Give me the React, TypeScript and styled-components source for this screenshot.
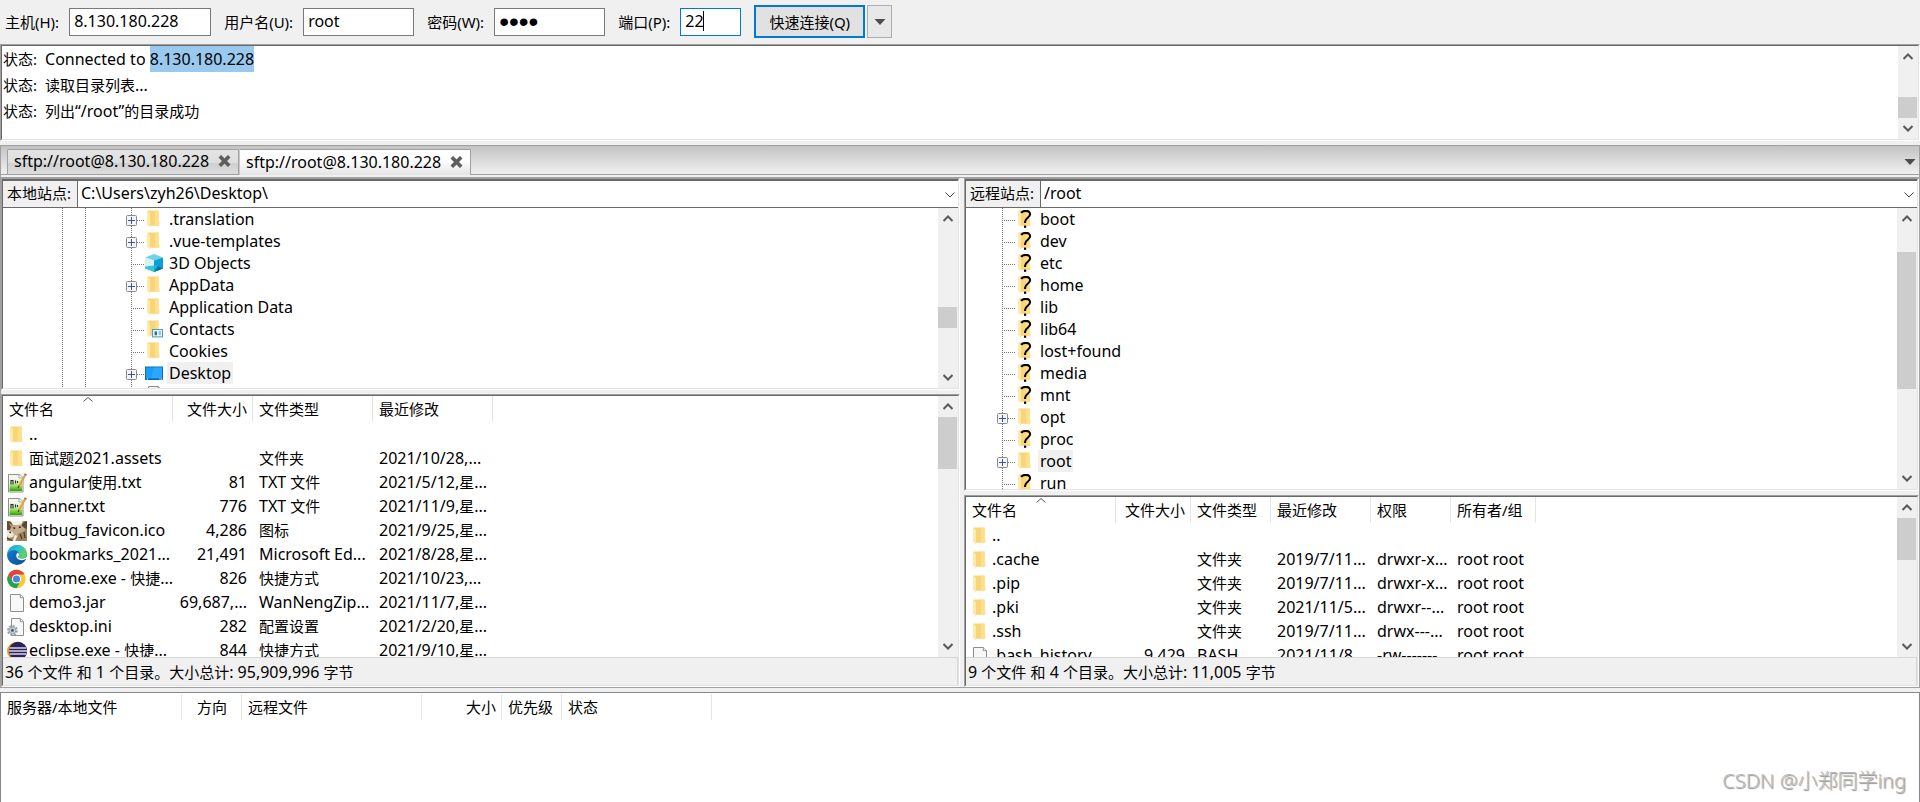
import React from "react";
import styled, { createGlobalStyle, css } from "styled-components";

const SURFACE = "#f0f0f0";
const SHADOW = "#a0a0a0";
const DARK_SHADOW = "#696969";
const LIGHT = "#e3e3e3";
const ACCENT = "#0078d7";

const GlobalStyle = createGlobalStyle`
  *, *::before, *::after { box-sizing: border-box; }
  body {
    margin: 0;
    background: ${SURFACE};
    color: #000;
    font: 15px/20px "Noto Sans", "Noto Sans CJK SC", sans-serif;
  }
  button, input, select { font: inherit; color: inherit; margin: 0; border-radius: 0; }
  button { padding: 0; }
`;

/* ---------- text ---------- */

const Body = styled.span`
  font-size: 16px;
  white-space: pre;
`;
const Han = styled.span`
  font-size: 15px;
`;

const HAN_RUN = /([\u3001-\u9fff\uff00-\uffef]+)/;

/** Chinese runs are set one pixel smaller than Latin runs. */
function Mixed({ children }: { children: string }) {
  return (
    <Body>
      {children.split(HAN_RUN).map((part, i) => (i % 2 ? <Han key={i}>{part}</Han> : part))}
    </Body>
  );
}

/* ---------- shell ---------- */

const Page = styled.div`
  display: flex;
  flex-direction: column;
  min-height: 100vh;
`;

const FrameOuter = styled.div<{ $grow?: boolean }>`
  display: flex;
  flex-direction: column;
  min-width: 0;
  min-height: 0;
  border: 1px solid;
  border-color: ${SHADOW} #fff #fff ${SHADOW};
  ${(p) => p.$grow && css`flex: 1;`}
`;
const FrameInner = styled.div`
  display: flex;
  flex-direction: column;
  flex: 1;
  min-height: 0;
  border: 1px solid;
  border-color: ${DARK_SHADOW} ${LIGHT} ${LIGHT} ${DARK_SHADOW};
  background: #fff;
`;

function Frame({ grow, children }: { grow?: boolean; children: React.ReactNode }) {
  return (
    <FrameOuter $grow={grow}>
      <FrameInner>{children}</FrameInner>
    </FrameOuter>
  );
}

/* ---------- quick connect ---------- */

const Toolbar = styled.form`
  display: flex;
  align-items: center;
  height: 44px;
  padding: 0 5px 1px;
`;
const Field = styled.label<{ $w: number; $focused?: boolean }>`
  position: relative;
  display: flex;
  align-items: center;
  gap: 10px;
  margin-right: 13px;
  white-space: nowrap;
  input {
    width: ${(p) => p.$w}px;
    height: 28px;
    padding: 0 4px 2px;
    border: 1px solid ${(p) => (p.$focused ? ACCENT : "#7a7a7a")};
    background: #fff;
    font-size: 16px;
    outline: 0;
  }
  input[type="password"] {
    padding-bottom: 0;
    font-family: "Liberation Sans", sans-serif;
    font-size: 28px;
    line-height: 26px;
  }
`;
const Caret = styled.i`
  position: absolute;
  right: 37px;
  top: 3px;
  width: 1px;
  height: 20px;
  background: #000;
`;
const ConnectButton = styled.button`
  width: 111px;
  height: 33px;
  margin-right: 2px;
  border: 2px solid ${ACCENT};
  background: #e1e1e1;
  font-size: 15px;
`;
const MenuButton = styled.button`
  display: grid;
  place-items: center;
  width: 25px;
  height: 33px;
  border: 1px solid #adadad;
  background: #e8e8e8;
`;

const Triangle = () => (
  <svg width="12" height="6" viewBox="0 0 12 6" aria-hidden="true">
    <path d="M0.5 0h11L6 6z" fill="#4d4d4d" />
  </svg>
);

/* ---------- scrollbar ---------- */

const Scroller = styled.div`
  display: flex;
  flex-direction: column;
  flex: none;
  width: 20px;
  background: ${SURFACE};
`;
const ScrollButton = styled.button`
  display: grid;
  place-items: center;
  width: 19px;
  height: 21px;
  border: 0;
  background: none;
`;
const ScrollTrack = styled.div`
  flex: 1;
`;
const Thumb = styled.div<{ $offset: number; $size: number }>`
  width: 19px;
  height: ${(p) => p.$size}px;
  margin-top: ${(p) => p.$offset}px;
  background: #cdcdcd;
`;

function Scrollbar({ offset, size }: { offset: number; size: number }) {
  return (
    <Scroller>
      <ScrollButton type="button" aria-label="向上滚动">
        <svg width="10" height="8" viewBox="0 0 10 8" fill="none" stroke="#5a5a5a" strokeWidth="2">
          <path d="M0.5 6L5 1.5l4.5 4.5" />
        </svg>
      </ScrollButton>
      <ScrollTrack>
        <Thumb $offset={offset} $size={size} />
      </ScrollTrack>
      <ScrollButton type="button" aria-label="向下滚动">
        <svg width="10" height="8" viewBox="0 0 10 8" fill="none" stroke="#5a5a5a" strokeWidth="2">
          <path d="M0.5 1L5 5.5l4.5-4.5" />
        </svg>
      </ScrollButton>
    </Scroller>
  );
}

const ScrollArea = styled.div<{ $h?: number }>`
  display: flex;
  min-height: 0;
  ${(p) => (p.$h ? css`height: ${p.$h}px;` : css`flex: 1;`)}
`;
const Viewport = styled.div`
  flex: 1;
  min-width: 0;
  overflow: hidden;
`;

/* ---------- message log ---------- */

const LogLine = styled.p`
  display: flex;
  gap: 8px;
  height: 26px;
  margin: 0;
  padding-left: 1px;
  line-height: 26px;
`;
const Selected = styled.mark`
  display: inline-block;
  background: #99c9ef;
  color: inherit;
`;

/* ---------- tabs ---------- */

const TabStrip = styled.div`
  display: flex;
  align-items: flex-end;
  height: 30px;
  margin-top: 4px;
  padding-left: 6px;
  border: 1px solid ${SHADOW};
  background: linear-gradient(#c3c3c3, #f0f0f0);
`;
const Tab = styled.button<{ $active?: boolean }>`
  display: flex;
  align-items: center;
  justify-content: space-between;
  width: 232px;
  height: ${(p) => (p.$active ? 26 : 25)}px;
  margin-bottom: ${(p) => (p.$active ? -1 : 0)}px;
  padding: 0 7px 2px 6px;
  border: 1px solid ${SHADOW};
  border-bottom: 0;
  border-radius: 2px 2px 0 0;
  background: ${(p) =>
    p.$active
      ? "linear-gradient(#fff, #fff 40%, #e4e4e4)"
      : "linear-gradient(#e4e4e4, #dedede 55%, #d0d0d0 56%, #dcdcdc)"};
  & + & { border-left-color: #c8c8c8; }
`;
const TabMenu = styled.button`
  margin: 0 3px 9px auto;
  border: 0;
  background: none;
  line-height: 0;
`;
const Cross = () => (
  <svg width="13" height="12" viewBox="0 0 13 12" aria-hidden="true">
    <path d="M1.8 1.2l9.4 9.6M11.2 1.2l-9.4 9.6" stroke="#5e5e5e" strokeWidth="3.6" />
  </svg>
);

/* ---------- panes ---------- */

const Workspace = styled.div`
  padding-top: 2px;
  border: 1px solid ${SHADOW};
  border-top: 0;
`;
const Split = styled.div`
  display: grid;
  grid-template-columns: 959fr 955fr;
  gap: 4px;
  height: 510px;
  border-top: 1px solid ${SHADOW};
`;
const Pane = styled.section`
  display: flex;
  flex-direction: column;
  gap: 4px;
  min-width: 0;
  min-height: 0;
`;
const SiteBar = styled.label`
  display: flex;
  height: 28px;
  border-top: 1px solid ${DARK_SHADOW};
  border-bottom: 1px solid ${DARK_SHADOW};
  line-height: 25px;
`;
const SiteLabel = styled.span`
  width: 75px;
  padding-left: 4px;
  border-right: 1px solid ${DARK_SHADOW};
  background: ${SURFACE};
  white-space: nowrap;
`;
const SiteSelect = styled.select`
  flex: 1;
  min-width: 0;
  padding: 0 0 2px 3px;
  border: 0;
  appearance: none;
  background: none;
  font-size: 16px;
  line-height: 20px;
`;
const SiteChevron = styled.svg`
  align-self: center;
  margin: 2px 3px 0 0;
`;

/* ---------- icons ---------- */

const FolderShape = () => (
  <>
    <path d="M3 0.5h10.6v10l0.6 2v3.2H4.5z" fill="#f7d578" />
    <path d="M10 0.5h3.6v10l0.6 2v3.2H10z" fill="#ffe08a" />
    <path d="M2 0.5l3 2.4v14.6L2 14.8z" fill="#ffe9a8" />
  </>
);

const FolderIcon = () => (
  <svg width="18" height="18" viewBox="0 0 18 18">
    <FolderShape />
  </svg>
);
const UnknownFolderIcon = () => (
  <svg width="18" height="18" viewBox="0 0 18 18">
    <FolderShape />
    <path
      d="M5.2 2.8C6.4 1.2 8.2 0.9 9.8 0.9c2.6 0 4.300 1.200 4.300 3.400 0 3.300-5 3.600-5 7.400v1.200"
      fill="none"
      stroke="#000"
      strokeWidth="2.1"
    />
    <rect x="8" y="15.6" width="2.2" height="2.2" fill="#000" />
  </svg>
);
const CubeIcon = () => (
  <svg width="18" height="18" viewBox="0 0 18 18">
    <path d="M9 0l9 3.4-9 3L0 3.4z" fill="#6fd3e4" />
    <path d="M0 3.4l9 3V18l-9-3.4z" fill="#c2eef0" />
    <path d="M0 12.4l9-3V18l-9-3.4z" fill="#3cc3d6" />
    <path d="M18 3.4l-9 3V18l9-3.4z" fill="#0a9fd8" />
    <path d="M9 10.5l4 2L9 18z" fill="#16b5d9" />
    <path d="M18 14.6l-5-2.4L9 18z" fill="#0b6f97" />
    <path d="M0 3.4l9 3 0 5L0 12.4z" fill="#d5f3f3" />
  </svg>
);
const ContactsIcon = () => (
  <svg width="18" height="18" viewBox="0 0 18 18">
    <FolderShape />
    <rect x="7.5" y="9.5" width="10" height="7.4" fill="#e6f4fb" stroke="#4a9cc9" />
    <rect x="9.6" y="11.4" width="2.4" height="3.8" fill="#2f6f8f" />
    <path d="M13.6 12h2.4M13.6 14h2.4" stroke="#4a9cc9" />
  </svg>
);
const DesktopIcon = () => (
  <svg width="18" height="18" viewBox="0 0 18 18">
    <rect x="0.5" y="3" width="17" height="12.5" fill="#1b9dfb" stroke="#0a6fc2" />
    <path d="M9 3.5h8v11H6z" fill="#3aaeff" opacity="0.6" />
    <path d="M1 15h16" stroke="#0a5ca8" />
    <path d="M2 15h1M14.5 15h1M16 15h1" stroke="#fff" />
  </svg>
);
const PageIcon = () => (
  <svg width="20" height="20" viewBox="0 0 20 20">
    <path d="M3.5 1.5h9.8l3.2 3.2v13.8h-13z" fill="#f8f8f8" stroke="#8e8e8e" />
    <path d="M13.3 1.5v3.2h3.2" fill="#fff" stroke="#8e8e8e" />
  </svg>
);
const ConfigIcon = () => (
  <svg width="20" height="20" viewBox="0 0 20 20">
    <path d="M4.5 1.5h8.8l3.2 3.2v13.8h-12z" fill="#f8f8f8" stroke="#8e8e8e" />
    <path d="M13.3 1.5v3.2h3.2" fill="#fff" stroke="#8e8e8e" />
    <circle cx="5.4" cy="13.4" r="4.4" fill="none" stroke="#93a0a8" strokeWidth="2" strokeDasharray="2 1.4" />
    <circle cx="5.4" cy="13.4" r="3.4" fill="#c3ccd2" stroke="#98a4ab" />
    <circle cx="5.4" cy="13.4" r="1.3" fill="#3d4a52" />
  </svg>
);
const NoteIcon = () => (
  <svg width="20" height="20" viewBox="0 0 20 20">
    <defs>
      <linearGradient id="note" x1="0" y1="0" x2="0" y2="1">
        <stop offset="0" stopColor="#f4f8f2" />
        <stop offset="0.4" stopColor="#cdeeb0" />
        <stop offset="0.7" stopColor="#7fd23e" />
        <stop offset="1" stopColor="#2f9a10" />
      </linearGradient>
    </defs>
    <path d="M1.5 1.500h11l3.500 3v14.500h-14.500z" fill="#f6f6f6" stroke="#8d938a" />
    <rect x="2.500" y="5" width="12.500" height="13" fill="url(#note)" />
    <path d="M12 1.500v3.500h4" fill="#fff" stroke="#a2a8a0" />
    <path d="M4 11.500V7.500h2v4M8.500 7.500v3M10.500 8v2" fill="none" stroke="#2c2c2c" strokeWidth="1.100" />
    <path d="M18.200 2L11.800 13.400" stroke="#e3a637" strokeWidth="2.200" />
    <path d="M18.900 0.800l-0.900 1.600" stroke="#a86a74" strokeWidth="2.400" />
    <path d="M11.900 13l-0.900 2" stroke="#4c3a1c" strokeWidth="1.200" />
  </svg>
);
const PetIcon = () => (
  <svg width="20" height="20" viewBox="0 0 20 20">
    <rect width="20" height="20" fill="#a58a68" />
    <path d="M3 0h13l-2 4H6z" fill="#f3efe8" />
    <path d="M0 0l4 1 2 4-3 4H0z" fill="#5f4b36" />
    <path d="M20 0l-3 1-3 4 6 3z" fill="#5c4934" />
    <path d="M2 2l3 2-1 2z" fill="#cdb394" />
    <path d="M5 4.500l9-1 4 5-3 6-8 2-5-6z" fill="#c4ab8a" />
    <path d="M0 9l4 1 3 3-1 3-4 1-2-2z" fill="#efe6d6" />
    <path d="M6.500 6.500l1.500 1.200M12 6.500l1.800-0.600M2.500 11l1.500 0.600" stroke="#2e2118" strokeWidth="1.500" />
    <path d="M11 13l9-4v11h-9z" fill="#9c8262" />
    <path d="M13 13l2 5M17 11l1 6M0 17l5 2.500" stroke="#4d3b29" strokeWidth="1.200" />
    <path d="M9 14.500l-2 5.500" stroke="#f3ebdd" strokeWidth="2.400" />
  </svg>
);
const EdgeIcon = () => (
  <svg width="20" height="20" viewBox="0 0 20 20">
    <defs>
      <linearGradient id="edgeTop" x1="0" y1="0" x2="1" y2="0.4">
        <stop offset="0" stopColor="#1b9de2" />
        <stop offset="0.55" stopColor="#2cc3d2" />
        <stop offset="1" stopColor="#62d35a" />
      </linearGradient>
      <linearGradient id="edgeBase" x1="0" y1="0" x2="1" y2="1">
        <stop offset="0" stopColor="#1682d8" />
        <stop offset="1" stopColor="#0c4a94" />
      </linearGradient>
    </defs>
    <circle cx="10" cy="10" r="10" fill="url(#edgeBase)" />
    <path d="M0.2 9C1 3.8 5 0 10.2 0 16 0 20 4.200 20 8.800c0 3-2.300 4.900-5 4.900-2.200 0-3.500-.8-3.500-1.700 0-.7.8-1 .8-2.400C12.300 7 9.800 5.200 6.900 5.200 3.600 5.200 1 7 .2 9z" fill="url(#edgeTop)" />
    <path d="M11 7.800c-2.400 0.600-2.600 5.400 1.400 7 2.400 0.900 5 0.300 6.800-1 l1.300 0.200 -0.500 -2.500c-1.500 1.800-4 2.500-6.500 2-2.200-.5-2.700-1.400-2-2.200.8-1 .8-2.600-.5-3.500z" fill="#fff" />
  </svg>
);
const ChromeIcon = () => (
  <svg width="20" height="20" viewBox="0 0 20 20">
    <circle cx="9.500" cy="10" r="9.200" fill="#fbc934" />
    <path d="M1.500 5.400A9.200 9.200 0 0 1 17.500 5.400H9.500L5.500 12.300z" fill="#e0443a" />
    <path d="M1.500 5.400A9.200 9.200 0 0 0 9.500 19.200l4-6.900-8 0z" fill="#23a252" />
    <circle cx="9.500" cy="10" r="4.600" fill="#fff" />
    <circle cx="9.500" cy="10" r="3.600" fill="#4a86ea" />
  </svg>
);
const EclipseIcon = () => (
  <svg width="20" height="20" viewBox="0 0 20 20">
    <circle cx="9" cy="10" r="9" fill="#f59a2c" />
    <circle cx="11" cy="10" r="9.200" fill="#2c2255" />
    <path d="M2.600 7h16.800M2 10h18M2.600 13h16.800" stroke="#d9d4ee" strokeWidth="1.400" />
  </svg>
);

const ICONS = {
  folder: FolderIcon,
  unknown: UnknownFolderIcon,
  cube: CubeIcon,
  contacts: ContactsIcon,
  desktop: DesktopIcon,
  page: PageIcon,
  config: ConfigIcon,
  note: NoteIcon,
  pet: PetIcon,
  edge: EdgeIcon,
  chrome: ChromeIcon,
  eclipse: EclipseIcon,
};
type IconName = keyof typeof ICONS;

/* ---------- directory tree ---------- */

const TreeList = styled.ul`
  margin: 0;
  padding: 0;
  list-style: none;
`;
const TreeRow = styled.li<{ $indent: number }>`
  display: flex;
  height: 22px;
  padding-left: ${(p) => p.$indent}px;
  svg { flex: none; }
`;
const Guide = styled.span<{ $w: number }>`
  flex: none;
  width: ${(p) => p.$w}px;
  background: repeating-linear-gradient(#777 0 1px, #fff 1px 2px) left / 1px 100% no-repeat;
`;
const TreeIcon = styled.span`
  display: grid;
  place-items: center;
  width: 18px;
  height: 22px;
`;
const TreeLabel = styled.span<{ $selected?: boolean }>`
  margin-left: 4px;
  padding: 0 2px;
  background: ${(p) => (p.$selected ? SURFACE : "none")};
  line-height: 22px;
`;

function Branch({ expandable }: { expandable?: boolean }) {
  return (
    <svg width="19" height="22" viewBox="0 0 19 22" aria-hidden="true">
      <path d="M5.500 0v22" stroke="#777" strokeDasharray="1 1" />
      <path d="M5 12.500h13" stroke="#777" strokeDasharray="1 1" />
      {expandable && (
        <>
          <rect x="0.500" y="7.500" width="10" height="10" rx="1" fill="#f4f4f4" stroke="#8a8a8a" />
          <path d="M2 12.500h7M5.500 9v7" stroke="#3a55a4" />
        </>
      )}
    </svg>
  );
}

interface Node {
  name: string;
  icon: IconName;
  expandable?: boolean;
  selected?: boolean;
}

function Tree({ nodes, indent, guides = [] }: { nodes: Node[]; indent: number; guides?: number[] }) {
  return (
    <TreeList>
      {nodes.map((n, i) => {
        const Icon = ICONS[n.icon];
        return (
          <TreeRow key={i} $indent={indent}>
            {guides.map((w, g) => (
              <Guide key={g} $w={w} />
            ))}
            <Branch expandable={n.expandable} />
            <TreeIcon>
              <Icon />
            </TreeIcon>
            <TreeLabel $selected={n.selected}>
              <Mixed>{n.name}</Mixed>
            </TreeLabel>
          </TreeRow>
        );
      })}
    </TreeList>
  );
}

/* ---------- tables ---------- */

type Align = "left" | "right" | "center";

const Grid = styled.table`
  table-layout: fixed;
  width: 0;
  border-collapse: collapse;
`;
const HeadCell = styled.th<{ $align?: Align }>`
  position: relative;
  height: 27px;
  padding: 0;
  font-weight: 400;
  text-align: ${(p) => p.$align || "left"};
  white-space: nowrap;
`;
const HeadLabel = styled.div`
  height: 26px;
  margin-bottom: 1px;
  padding: 1px 5px 0 6px;
  border-right: 1px solid #e5e5e5;
  line-height: 24px;
`;
const SortMark = styled.svg`
  position: absolute;
  top: 1px;
  left: calc(50% - 5px);
`;
const Cell = styled.td<{ $align?: Align }>`
  height: 24px;
  padding: 0 6px;
  overflow: hidden;
  line-height: 22px;
  text-align: ${(p) => p.$align || "left"};
  vertical-align: top;
  white-space: nowrap;
`;
const NameCell = styled(Cell)`
  padding: 0 0 0 4px;
`;
const FileName = styled.div`
  display: flex;
  gap: 2px;
  height: 24px;
`;
const FileIcon = styled.span`
  display: grid;
  place-items: center;
  flex: none;
  width: 20px;
  height: 24px;
`;

interface Column {
  label: string;
  width: number;
  align?: Align;
}

function Header({ columns, sorted }: { columns: Column[]; sorted?: boolean }) {
  return (
    <>
      <colgroup>
        {columns.map((c) => (
          <col key={c.label} style={{ width: c.width }} />
        ))}
      </colgroup>
      <thead>
        <tr>
          {columns.map((c, i) => (
            <HeadCell key={c.label} $align={c.align}>
              <HeadLabel>{c.label}</HeadLabel>
              {sorted && i === 0 && (
                <SortMark width="10" height="5" viewBox="0 0 10 5" fill="none" stroke="#555">
                  <path d="M0.500 4.500L5 0.500l4.500 4" />
                </SortMark>
              )}
            </HeadCell>
          ))}
        </tr>
      </thead>
    </>
  );
}

type FileRow = [IconName, ...string[]];

function FileTable({ columns, rows }: { columns: Column[]; rows: FileRow[] }) {
  return (
    <Grid>
      <Header columns={columns} sorted />
      <tbody>
        {rows.map(([icon, name, ...rest], r) => {
          const Icon = ICONS[icon];
          return (
            <tr key={r}>
              <NameCell>
                <FileName>
                  <FileIcon>
                    <Icon />
                  </FileIcon>
                  <Mixed>{name}</Mixed>
                </FileName>
              </NameCell>
              {rest.map((value, i) => (
                <Cell key={i} $align={columns[i + 1].align}>
                  <Mixed>{value}</Mixed>
                </Cell>
              ))}
            </tr>
          );
        })}
      </tbody>
    </Grid>
  );
}

const StatusBar = styled.footer`
  height: 28px;
  padding: 1px 0 0 2px;
  border-top: 1px solid #d7d7d7;
  border-right: 1px solid #d7d7d7;
  background: ${SURFACE};
  line-height: 26px;
`;

/* ---------- transfer queue ---------- */

const Queue = styled.section`
  position: relative;
  flex: 1;
  margin-top: 4px;
  padding-top: 1px;
  border: 1px solid #828790;
  border-bottom: 0;
  background: #fff;
`;
const Watermark = styled.span`
  position: absolute;
  right: 13px;
  bottom: 6px;
  color: #bcbcbc;
  font: 300 20px/30px "Noto Sans", "Noto Sans CJK SC", sans-serif;
  text-shadow: 1px 1px 1px #8c8c8c;
`;

/* ---------- data ---------- */

const LOCAL_TREE: Node[] = [
  { name: ".translation", icon: "folder", expandable: true },
  { name: ".vue-templates", icon: "folder", expandable: true },
  { name: "3D Objects", icon: "cube" },
  { name: "AppData", icon: "folder", expandable: true },
  { name: "Application Data", icon: "folder" },
  { name: "Contacts", icon: "contacts" },
  { name: "Cookies", icon: "folder" },
  { name: "Desktop", icon: "desktop", expandable: true, selected: true },
  { name: "", icon: "page" },
];

const REMOTE_TREE: Node[] = [
  { name: "boot", icon: "unknown" },
  { name: "dev", icon: "unknown" },
  { name: "etc", icon: "unknown" },
  { name: "home", icon: "unknown" },
  { name: "lib", icon: "unknown" },
  { name: "lib64", icon: "unknown" },
  { name: "lost+found", icon: "unknown" },
  { name: "media", icon: "unknown" },
  { name: "mnt", icon: "unknown" },
  { name: "opt", icon: "folder", expandable: true },
  { name: "proc", icon: "unknown" },
  { name: "root", icon: "folder", expandable: true, selected: true },
  { name: "run", icon: "unknown" },
];

const LOCAL_COLUMNS: Column[] = [
  { label: "文件名", width: 170 },
  { label: "文件大小", width: 80, align: "right" },
  { label: "文件类型", width: 120 },
  { label: "最近修改", width: 120 },
];
const LOCAL_FILES: FileRow[] = [
  ["folder", "..", "", "", ""],
  ["folder", "面试题2021.assets", "", "文件夹", "2021/10/28,..."],
  ["note", "angular使用.txt", "81", "TXT 文件", "2021/5/12,星..."],
  ["note", "banner.txt", "776", "TXT 文件", "2021/11/9,星..."],
  ["pet", "bitbug_favicon.ico", "4,286", "图标", "2021/9/25,星..."],
  ["edge", "bookmarks_2021...", "21,491", "Microsoft Ed...", "2021/8/28,星..."],
  ["chrome", "chrome.exe - 快捷...", "826", "快捷方式", "2021/10/23,..."],
  ["page", "demo3.jar", "69,687,...", "WanNengZip...", "2021/11/7,星..."],
  ["config", "desktop.ini", "282", "配置设置", "2021/2/20,星..."],
  ["eclipse", "eclipse.exe - 快捷...", "844", "快捷方式", "2021/9/10,星..."],
];

const REMOTE_COLUMNS: Column[] = [
  { label: "文件名", width: 150 },
  { label: "文件大小", width: 75, align: "right" },
  { label: "文件类型", width: 80 },
  { label: "最近修改", width: 100 },
  { label: "权限", width: 80 },
  { label: "所有者/组", width: 85 },
];
const REMOTE_FILES: FileRow[] = [
  ["folder", "..", "", "", "", "", ""],
  ["folder", ".cache", "", "文件夹", "2019/7/11...", "drwxr-x...", "root root"],
  ["folder", ".pip", "", "文件夹", "2019/7/11...", "drwxr-x...", "root root"],
  ["folder", ".pki", "", "文件夹", "2021/11/5...", "drwxr--...", "root root"],
  ["folder", ".ssh", "", "文件夹", "2019/7/11...", "drwx---...", "root root"],
  ["page", ".bash_history", "9,429", "BASH", "2021/11/8...", "-rw-------", "root root"],
];

const QUEUE_COLUMNS: Column[] = [
  { label: "服务器/本地文件", width: 181 },
  { label: "方向", width: 60, align: "center" },
  { label: "远程文件", width: 180 },
  { label: "大小", width: 80, align: "right" },
  { label: "优先级", width: 60 },
  { label: "状态", width: 150 },
];

/* ---------- page ---------- */

interface SiteProps {
  label: string;
  path: string;
  tree: React.ReactNode;
  treeHeight: number;
  treeThumb: [number, number];
  files: React.ReactNode;
  filesThumb: [number, number];
  summary: string;
}

function Site({ label, path, tree, treeHeight, treeThumb, files, filesThumb, summary }: SiteProps) {
  return (
    <Pane>
      <Frame>
        <SiteBar>
          <SiteLabel>{label}</SiteLabel>
          <SiteSelect defaultValue={path}>
            <option>{path}</option>
          </SiteSelect>
          <SiteChevron width="10" height="6" viewBox="0 0 10 6" fill="none" stroke="#444">
            <path d="M0.500 0.500L5 5l4.500-4.500" />
          </SiteChevron>
        </SiteBar>
        <ScrollArea $h={treeHeight}>
          <Viewport>{tree}</Viewport>
          <Scrollbar offset={treeThumb[0]} size={treeThumb[1]} />
        </ScrollArea>
      </Frame>
      <Frame grow>
        <ScrollArea>
          <Viewport>{files}</Viewport>
          <Scrollbar offset={filesThumb[0]} size={filesThumb[1]} />
        </ScrollArea>
        <StatusBar>
          <Mixed>{summary}</Mixed>
        </StatusBar>
      </Frame>
    </Pane>
  );
}

export default function App() {
  return (
    <Page>
      <GlobalStyle />
      <Toolbar onSubmit={(e) => e.preventDefault()}>
        <Field $w={142}>
          主机(H):
          <input type="text" defaultValue="8.130.180.228" />
        </Field>
        <Field $w={111}>
          用户名(U):
          <input type="text" defaultValue="root" />
        </Field>
        <Field $w={111}>
          密码(W):
          <input type="password" defaultValue="root" />
        </Field>
        <Field $w={61} $focused>
          端口(P):
          <input type="text" defaultValue="22" />
          <Caret />
        </Field>
        <ConnectButton type="submit">快速连接(Q)</ConnectButton>
        <MenuButton type="button" aria-label="快速连接历史">
          <Triangle />
        </MenuButton>
      </Toolbar>

      <Frame>
        <ScrollArea $h={93}>
          <Viewport>
            <LogLine>
              <span>状态:</span>
              <Body>
                Connected to <Selected>8.130.180.228</Selected>
              </Body>
            </LogLine>
            <LogLine>
              <span>状态:</span>
              <Mixed>读取目录列表...</Mixed>
            </LogLine>
            <LogLine>
              <span>状态:</span>
              <Mixed>列出“/root”的目录成功</Mixed>
            </LogLine>
          </Viewport>
          <Scrollbar offset={30} size={21} />
        </ScrollArea>
      </Frame>

      <TabStrip>
        <Tab type="button">
          <Body>sftp://root@8.130.180.228</Body>
          <Cross />
        </Tab>
        <Tab type="button" $active>
          <Body>sftp://root@8.130.180.228</Body>
          <Cross />
        </Tab>
        <TabMenu type="button" aria-label="标签列表">
          <Triangle />
        </TabMenu>
      </TabStrip>

      <Workspace>
        <Split>
          <Site
            label="本地站点:"
            path="C:\Users\zyh26\Desktop\"
            tree={<Tree nodes={LOCAL_TREE} indent={59} guides={[23, 41]} />}
            treeHeight={180}
            treeThumb={[78, 21]}
            files={<FileTable columns={LOCAL_COLUMNS} rows={LOCAL_FILES} />}
            filesThumb={[0, 52]}
            summary="36 个文件 和 1 个目录。大小总计: 95,909,996 字节"
          />
          <Site
            label="远程站点:"
            path="/root"
            tree={<Tree nodes={REMOTE_TREE} indent={31} />}
            treeHeight={281}
            treeThumb={[23, 137]}
            files={<FileTable columns={REMOTE_COLUMNS} rows={REMOTE_FILES} />}
            filesThumb={[0, 42]}
            summary="9 个文件 和 4 个目录。大小总计: 11,005 字节"
          />
        </Split>
      </Workspace>

      <Queue>
        <Grid>
          <Header columns={QUEUE_COLUMNS} />
        </Grid>
        <Watermark>CSDN @小郑同学ing</Watermark>
      </Queue>
    </Page>
  );
}
